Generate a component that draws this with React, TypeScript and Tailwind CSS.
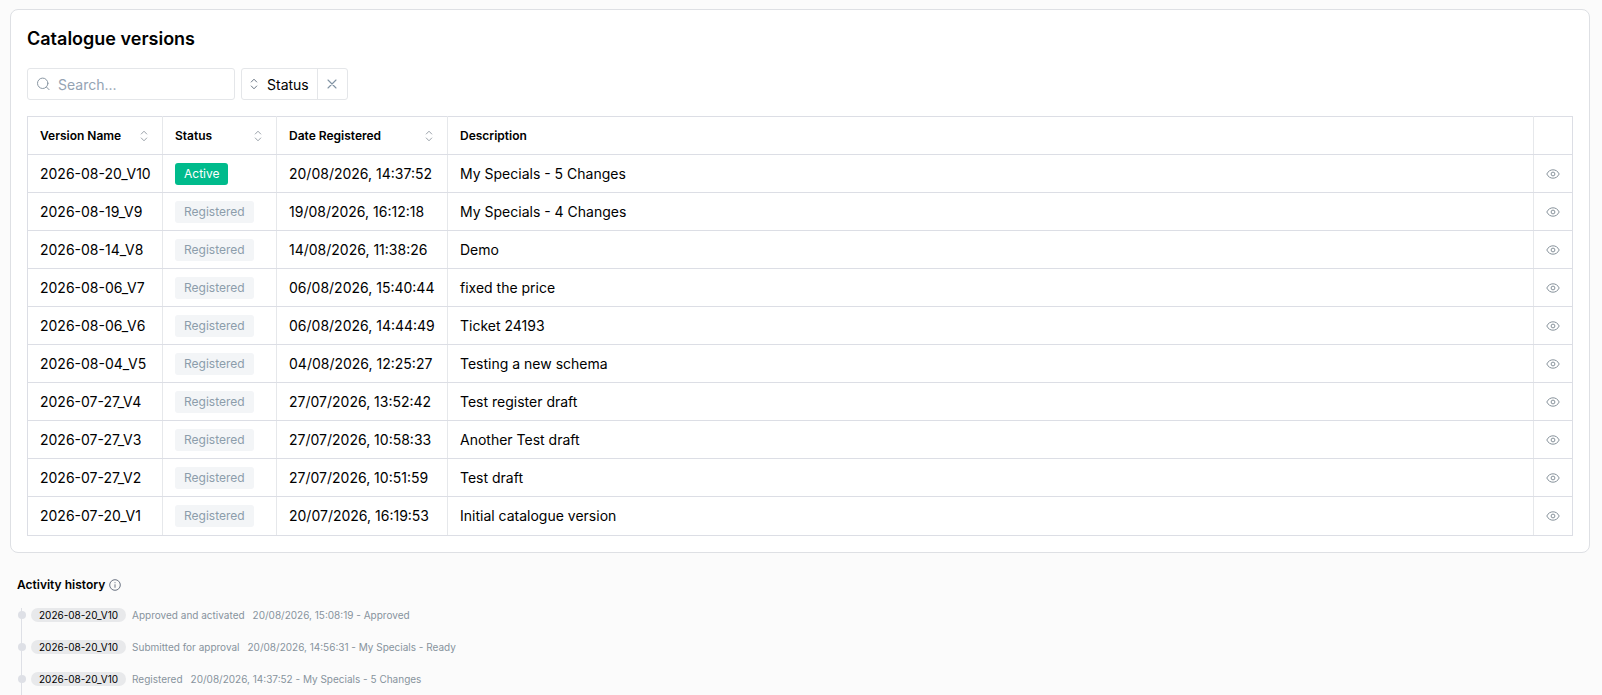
import React from 'react';

const versions = [
  { name: '2026-08-20_V10', status: 'Active', date: '20/08/2026, 14:37:52', description: 'My Specials - 5 Changes' },
  { name: '2026-08-19_V9', status: 'Registered', date: '19/08/2026, 16:12:18', description: 'My Specials - 4 Changes' },
  { name: '2026-08-14_V8', status: 'Registered', date: '14/08/2026, 11:38:26', description: 'Demo' },
  { name: '2026-08-06_V7', status: 'Registered', date: '06/08/2026, 15:40:44', description: 'fixed the price' },
  { name: '2026-08-06_V6', status: 'Registered', date: '06/08/2026, 14:44:49', description: 'Ticket 24193' },
  { name: '2026-08-04_V5', status: 'Registered', date: '04/08/2026, 12:25:27', description: 'Testing a new schema' },
  { name: '2026-07-27_V4', status: 'Registered', date: '27/07/2026, 13:52:42', description: 'Test register draft' },
  { name: '2026-07-27_V3', status: 'Registered', date: '27/07/2026, 10:58:33', description: 'Another Test draft' },
  { name: '2026-07-27_V2', status: 'Registered', date: '27/07/2026, 10:51:59', description: 'Test draft' },
  { name: '2026-07-20_V1', status: 'Registered', date: '20/07/2026, 16:19:53', description: 'Initial catalogue version' },
];

const activity = [
  { version: '2026-08-20_V10', action: 'Approved and activated', detail: '20/08/2026, 15:08:19 - Approved' },
  { version: '2026-08-20_V10', action: 'Submitted for approval', detail: '20/08/2026, 14:56:31 - My Specials - Ready' },
  { version: '2026-08-20_V10', action: 'Registered', detail: '20/08/2026, 14:37:52 - My Specials - 5 Changes' },
];

const columns = [
  { title: 'Version Name', sortable: true, width: 'w-[135px]' },
  { title: 'Status', sortable: true, width: 'w-[114px]' },
  { title: 'Date Registered', sortable: true, width: 'w-[171px]' },
  { title: 'Description', sortable: false, width: '' },
];

const cell = 'border border-x-[#e6e8eb] border-y-[#dcdee5] first:border-l-[#dcdee5] last:border-r-[#dcdee5]';

const SortIcon = ({ className }: { className: string }) => (
  <svg viewBox="0 0 8 12" className={className} fill="none" stroke="currentColor" strokeLinecap="round" strokeLinejoin="round" aria-hidden="true">
    <path d="M1.3 4 4 1.2 6.7 4M1.3 8 4 10.8 6.7 8" />
  </svg>
);

const SearchIcon = () => (
  <svg viewBox="0 0 14 14" className="w-3.5 h-3.5 shrink-0 text-[#8a97a3]" fill="none" stroke="currentColor" strokeLinecap="round" aria-hidden="true">
    <circle cx="6.7" cy="6.3" r="5.2" />
    <path d="m10.5 10.1 2.6 2.6" />
  </svg>
);

const CloseIcon = () => (
  <svg viewBox="0 0 10 10" className="w-2.5 h-2.5" fill="none" stroke="currentColor" strokeWidth="1.1" strokeLinecap="round" aria-hidden="true">
    <path d="m1 1 8 8M9 1 1 9" />
  </svg>
);

const EyeIcon = () => (
  <svg viewBox="0 0 14 10" className="w-3.5 h-2.5" fill="none" stroke="currentColor" aria-hidden="true">
    <path d="M.8 5C2.2 2.2 4.4.8 7 .8S11.8 2.2 13.2 5C11.8 7.8 9.6 9.2 7 9.2S2.2 7.8.8 5Z" />
    <circle cx="7" cy="5" r="1.9" />
  </svg>
);

const InfoIcon = () => (
  <svg viewBox="0 0 12 12" className="w-3 h-3 text-gray-500" fill="none" stroke="currentColor" aria-hidden="true">
    <circle cx="6" cy="6" r="5.3" />
    <path d="M6 5.3v3.4M6 3.2v1" />
  </svg>
);

const App = () => {
  return (
    <div className="h-screen overflow-hidden bg-[#fbfbfb] pt-[9px] pl-2.5 pr-3 font-['Inter',sans-serif] text-black">
      <section className="rounded-lg border border-[#dee0e4] bg-white p-4">
        <h1 className="text-lg leading-[26px] font-semibold">Catalogue versions</h1>

        <div className="my-4 flex gap-1.5">
          <label className="flex h-8 w-[208px] items-center gap-2 rounded-[3px] border border-[#e4e6e9] px-2">
            <SearchIcon />
            <input
              type="text"
              aria-label="Search"
              placeholder="Search..."
              className="w-full min-w-0 pt-0.5 text-sm outline-none placeholder:text-[#94a3b3]"
            />
          </label>
          <div className="flex h-8 rounded-[3px] border border-[#e4e6e9] text-sm">
            <button type="button" className="flex items-center gap-[9px] px-2">
              <SortIcon className="w-2 h-3 text-[#6b7785]" />
              <span className="pt-0.5">Status</span>
            </button>
            <button type="button" aria-label="Clear status" className="flex w-[30px] items-center justify-center border-l border-[#e4e6e9] text-[#8193a3]">
              <CloseIcon />
            </button>
          </div>
        </div>

        <table className="w-full border-collapse border border-[#dcdee5] text-left text-sm">
          <thead>
            <tr className="h-[38px]">
              {columns.map((column) => (
                <th key={column.title} className={`${column.width} ${cell} pl-3 pr-[11px] text-xs font-semibold`}>
                  <div className="flex items-center justify-between">
                    <span>{column.title}</span>
                    {column.sortable && <SortIcon className="mr-[3px] w-2 h-3 text-[#9ca3ab]" />}
                  </div>
                </th>
              ))}
              <th className={`w-[39px] ${cell}`} />
            </tr>
          </thead>
          <tbody>
            {versions.map((version) => (
              <tr key={version.name} className="h-[38px] last:h-[39px]">
                <td className={`${cell} pl-3 pr-[11px] whitespace-nowrap`}>{version.name}</td>
                <td className={`${cell} pl-3 pr-[11px]`}>
                  <span
                    className={`flex h-[22px] w-fit items-center rounded-[3px] px-[9px] text-xs ${
                      version.status === 'Active' ? 'bg-[#00bb8c] text-white' : 'bg-[#f3f5f7] text-[#8c9dab]'
                    }`}
                  >
                    {version.status}
                  </span>
                </td>
                <td className={`${cell} pl-3 pr-[11px] whitespace-nowrap`}>{version.date}</td>
                <td className={`${cell} pl-3 pr-[11px]`}>{version.description}</td>
                <td className={cell}>
                  <button type="button" aria-label={`View ${version.name}`} className="flex w-full justify-center text-[#87929b]">
                    <EyeIcon />
                  </button>
                </td>
              </tr>
            ))}
          </tbody>
        </table>
      </section>

      <section className="pt-6 pl-[7px]">
        <h2 className="flex items-center gap-1 text-xs font-semibold">
          Activity history
          <InfoIcon />
        </h2>
        <ul className="mt-[15px] ml-1 border-l border-[#dee0e6]">
          {activity.map((item) => (
            <li key={item.action} className="flex h-8 items-start text-[10px] leading-[14px] text-[#87939d]">
              <span className="mt-[3px] -ml-1 mr-[5px] h-2 w-2 rounded-full bg-[#dee0e6]" />
              <span className="mr-1.5 rounded-full bg-[#e8e9eb] px-2 text-black">{item.version}</span>
              <span className="mr-2">{item.action}</span>
              <span>{item.detail}</span>
            </li>
          ))}
        </ul>
      </section>
    </div>
  );
};

export default App;
